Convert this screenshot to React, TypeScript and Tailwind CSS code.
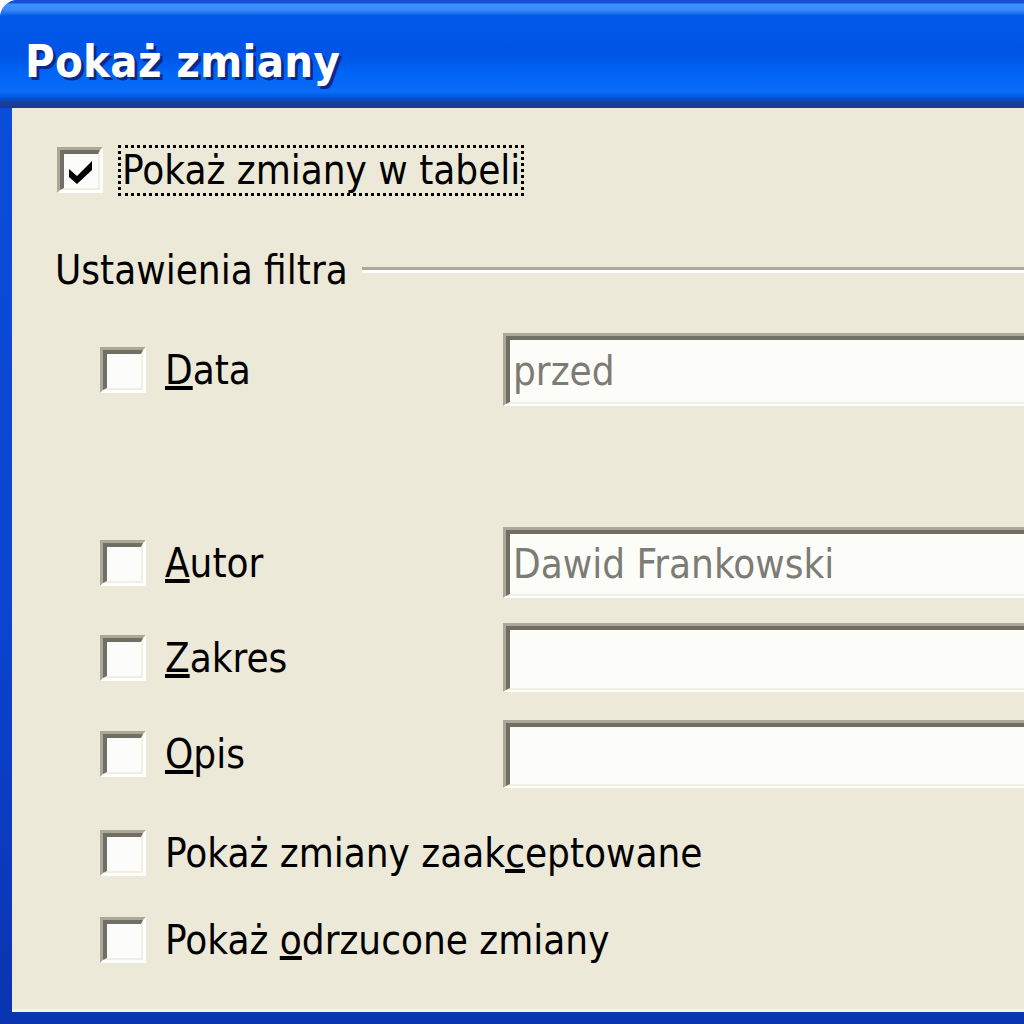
import React from 'react';

const font = { fontFamily: '"DejaVu Sans Condensed", "DejaVu Sans", sans-serif' };

function Checkbox({ checked = false }: { checked?: boolean }) {
  return (
    <div className="h-[46px] w-[46px] shrink-0 border-l-[3px] border-t-[3px] border-r-[3px] border-b-[3px] border-l-[#aca899] border-t-[#aca899] border-r-white border-b-white">
      <div className="flex h-full w-full items-center justify-center border-l-[4px] border-t-[4px] border-r-[2px] border-b-[2px] border-l-[#716f64] border-t-[#716f64] border-r-[#f1efe2] border-b-[#f1efe2] bg-[#fcfcfa]">
        {checked && (
          <svg width="28" height="26" viewBox="0 0 28 26" className="mt-[1px]">
            <path d="M2 10 L10 17 L25 2 L25 11 L10 25 L2 18 Z" fill="#000" />
          </svg>
        )}
      </div>
    </div>
  );
}

function TextBox({ value, h }: { value?: string; h: number }) {
  return (
    <div
      className="-mr-[12px] flex-1 border-l-[3px] border-t-[3px] border-b-[2px] border-l-[#aca899] border-t-[#aca899] border-b-white"
      style={{ height: h }}
    >
      <div className="flex h-full items-center border-l-[4px] border-t-[4px] border-b-[2px] border-l-[#716f64] border-t-[#716f64] border-b-[#f1efe2] bg-[#fcfcf9] pl-[3px] text-[40px] text-[#7c7b74]">
        {value}
      </div>
    </div>
  );
}

function FilterRow({
  label,
  value,
  h,
  mt,
  box = true
}: {
  label: React.ReactNode;
  value?: string;
  h: number;
  mt: number;
  box?: boolean;
}) {
  return (
    <div className="flex items-center pl-[88px]" style={{ height: h, marginTop: mt }}>
      <Checkbox />
      <div className={box ? 'w-[357px] shrink-0 pl-[19px]' : 'pl-[19px]'}>{label}</div>
      {box && <TextBox value={value} h={h} />}
    </div>
  );
}

export default function App() {
  return (
    <div className="h-[1024px] w-[1024px] overflow-hidden bg-white">
      <div
        className="flex h-[1024px] w-[1036px] flex-col overflow-hidden rounded-tl-[18px] bg-[linear-gradient(to_bottom,#0a4fdc,#0b44d0_60%,#0a34b0)]"
        style={font}
      >
        <div className="flex h-[108px] shrink-0 items-center bg-[linear-gradient(to_bottom,#1650d8_0px,#1650d8_3px,#3d92ff_4px,#3a8af8_10px,#0059ea_16px,#0054e4_55px,#0064f4_72px,#0a6cf8_92px,#0052dc_98px,#1c3f9e_102px,#173a92_108px)] pl-[25px] pt-[16px]">
          <span className="text-[45px] font-bold tracking-[0.3px] text-white [text-shadow:3px_3px_0_#0a2a8a]">
            Pokaż zmiany
          </span>
        </div>
        <div className="ml-[12px] mb-[12px] flex-1 border-b-[3px] border-b-[#f3f1e8] bg-[#ece9d8] text-[40px] leading-none text-black">
          <div className="flex h-[46px] items-center pl-[45px]" style={{ marginTop: 39 }}>
            <Checkbox checked />
            <span className="ml-[15px] border-[3px] border-dotted border-black px-[1px] pb-[3px] pt-[2px]">
              Pokaż zmiany w tabeli
            </span>
          </div>
          <div className="flex h-[40px] items-center pl-[43px]" style={{ marginTop: 57 }}>
            <span>Ustawienia filtra</span>
            <div className="ml-[14px] flex-1 border-t-[3px] border-b-[3px] border-t-[#aca899] border-b-white" />
          </div>
          <FilterRow label={<span><u>D</u>ata</span>} value="przed" h={73} mt={43} />
          <FilterRow label={<span><u>A</u>utor</span>} value="Dawid Frankowski" h={71} mt={121} />
          <FilterRow label={<span><u>Z</u>akres</span>} h={69} mt={25} />
          <FilterRow label={<span><u>O</u>pis</span>} h={68} mt={28} />
          <FilterRow label={<span>Pokaż zmiany zaak<u>c</u>eptowane</span>} h={48} mt={41} box={false} />
          <FilterRow label={<span>Pokaż <u>o</u>drzucone zmiany</span>} h={48} mt={39} box={false} />
        </div>
      </div>
    </div>
  );
}
